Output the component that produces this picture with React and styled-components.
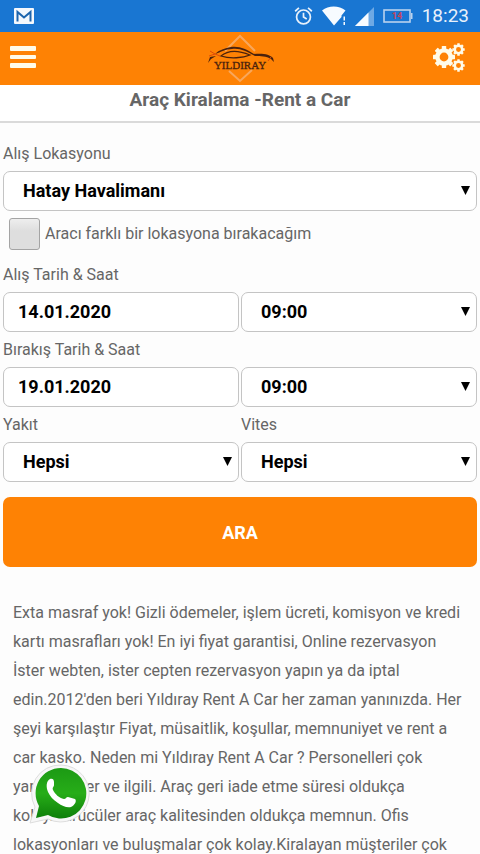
import { useState } from 'react';
import styled, { createGlobalStyle } from 'styled-components';

const GlobalStyle = createGlobalStyle`
  html {
    scrollbar-width: none;
  }

  body {
    margin: 0;
    background-color: #fdfdfd;
    color: #666;
    font-family: Roboto, 'Liberation Sans', sans-serif;
    font-size: 16px;
  }

  * {
    box-sizing: border-box;
  }
`;

const StatusBar = styled.div`
  height: 32px;
  padding: 0 11px 0 14px;
  display: flex;
  align-items: center;
  justify-content: space-between;
  background-color: #1976d2;
  color: #e8f1fb;

  svg {
    display: block;
  }
`;

const StatusIcons = styled.div`
  display: flex;
  align-items: center;
  gap: 9px;
`;

const Clock = styled.span`
  font-size: 19px;
  line-height: 32px;
`;

const Header = styled.header`
  height: 53px;
  padding: 0 10px;
  display: grid;
  grid-template-columns: 1fr auto 1fr;
  align-items: center;
  background-color: #fe8204;
`;

const IconButton = styled.button`
  border: none;
  background: none;
  padding: 0;
  color: #fffbe9;
  cursor: pointer;
  justify-self: ${props => props.$side};

  svg {
    display: block;
  }
`;

const LogoLink = styled.a`
  display: block;
  height: 53px;
`;

const PageTitle = styled.h1`
  margin: 0;
  height: 38px;
  padding-top: 3px;
  border-bottom: 2px solid #dadada;
  background-color: #fff;
  font-size: 19px;
  line-height: 24px;
  text-align: center;
`;

const SearchForm = styled.form`
  padding: 13px 3px 0;
`;

const FieldRow = styled.div`
  display: grid;
  grid-template-columns: ${props => (props.$single ? '1fr' : '1fr 1fr')};
  column-gap: 2px;
`;

const Field = styled.div`
  display: flex;
  flex-direction: column;
  justify-content: flex-end;
`;

const Label = styled.label`
  height: 35px;
  line-height: 35px;
`;

const TextInput = styled.input`
  width: 100%;
  height: 40px;
  padding: 0 14px 2px;
  border: 1px solid #c4c4c4;
  border-radius: 7px;
  background-color: #fff;
  color: #000;
  font: bold 18px Roboto, 'Liberation Sans', sans-serif;
`;

const SelectBox = styled.div`
  position: relative;

  svg {
    position: absolute;
    top: 15px;
    right: 7px;
    pointer-events: none;
  }
`;

const Select = styled(TextInput).attrs({ as: 'select' })`
  display: block;
  padding: 0 24px 2px 19px;
  appearance: none;
`;

const CheckRow = styled.div`
  padding: 7px 6px;
  display: flex;
  align-items: flex-start;
  gap: 5px;
`;

const CheckBox = styled.input`
  width: 31px;
  height: 32px;
  margin: 0;
  appearance: none;
  border: 1px solid #a4a4a4;
  border-radius: 3px;
  background: linear-gradient(#eee, #dedede 40%);

  &:checked {
    background: #fe8204;
  }
`;

const CheckLabel = styled.label`
  line-height: 31px;
`;

const SearchButton = styled.button`
  width: 100%;
  height: 70px;
  margin-top: 15px;
  border: none;
  border-radius: 7px;
  background-color: #fe8204;
  color: #fff;
  font: bold 18px Roboto, 'Liberation Sans', sans-serif;
  cursor: pointer;
`;

const Description = styled.p`
  margin: 0;
  padding: 31px 13px;
  line-height: 29px;
`;

const WhatsAppLink = styled.a`
  position: fixed;
  left: 29px;
  bottom: 30px;

  svg {
    display: block;
  }
`;

const times = ['09:00', '10:00', '11:00', '12:00'];

function GmailIcon() {
  return (
    <svg width="20" height="16" viewBox="0 0 20 16">
      <rect width="20" height="16" rx="1" fill="#f4f8fd" />
      <path
        d="M3.500 13.500V4l6.500 5.500L16.500 4v9.500"
        fill="none"
        stroke="#1c64ad"
        strokeWidth="2"
      />
    </svg>
  );
}

function AlarmIcon() {
  return (
    <svg
      width="19"
      height="20"
      viewBox="0 0 20 20"
      fill="none"
      stroke="#e8f1fb"
      strokeWidth="1.8"
    >
      <circle cx="10" cy="11" r="7.3" />
      <path d="M10 6.500V11l3.400 2.200M1.200 5l4-3.500M18.800 5l-4-3.500" />
    </svg>
  );
}

function WifiIcon() {
  return (
    <svg width="24" height="20" viewBox="0 0 24 20" fill="#f7fbff">
      <path d="M0 4.500C6.500-.9 17-.9 23.500 4.500L19.500 9.500V11L12 19.500z" />
      <path d="M21.500 10.500H23v4h-1.500zM21.500 16H23v3h-1.500z" />
    </svg>
  );
}

function SignalIcon() {
  return (
    <svg width="19" height="19" viewBox="0 0 19 19">
      <path d="M19 0v19H0z" fill="#6ea9e4" />
      <path d="M13.500 5.500V19H0z" fill="#f7fbff" />
    </svg>
  );
}

function BatteryIcon() {
  return (
    <svg width="30" height="14" viewBox="0 0 30 14">
      <rect
        x="1"
        y="1"
        width="26"
        height="12"
        fill="none"
        stroke="#b9d2ee"
        strokeWidth="1.600"
      />
      <path d="M28 4h1.500v6H28z" fill="#b9d2ee" />
      <text
        x="14"
        y="10"
        textAnchor="middle"
        fontSize="9"
        fontWeight="bold"
        fill="#c8455c"
      >
        14
      </text>
    </svg>
  );
}

function MenuIcon() {
  return (
    <svg width="26" height="25" viewBox="0 0 26 25" fill="currentColor">
      <rect x="0" y="0" width="26" height="5" rx="1" />
      <rect x="0" y="9" width="26" height="4" rx="1" />
      <rect x="0" y="17" width="26" height="5" rx="1" />
    </svg>
  );
}

function Gear({ x, y, r, teeth }) {
  const angles = Array.from({ length: teeth }, (_, i) => (i * 360) / teeth);
  return (
    <g transform={`translate(${x} ${y})`}>
      <circle
        r={r * 0.6}
        fill="none"
        stroke="currentColor"
        strokeWidth={r * 0.4}
      />
      {angles.map(angle => (
        <rect
          key={angle}
          x={-r * 0.2}
          y={-r}
          width={r * 0.4}
          height={r * 0.34}
          rx={r * 0.05}
          fill="currentColor"
          transform={`rotate(${angle})`}
        />
      ))}
    </g>
  );
}

function GearsIcon() {
  return (
    <svg width="37" height="31" viewBox="0 0 37 31">
      <Gear x={11} y={14} r={11} teeth={8} />
      <Gear x={25.500} y={6.500} r={6.200} teeth={8} />
      <Gear x={25.500} y={22.500} r={6.200} teeth={8} />
    </svg>
  );
}

function Logo() {
  return (
    <svg width="70" height="53" viewBox="0 0 70 53">
      <path
        d="M20 19L35 4l15 15M24 39l11 10 12-11"
        fill="none"
        stroke="#f8a75c"
        strokeWidth="2"
      />
      <path
        d="M10 22c4-4 10-6 16-7 9-1 15 2 23 7 8-1 16 0 19 4l1 4-3-3c-5-3-10-3-16-3-9-5-15-8-23-7-6 0-11 3-17 5z"
        fill="#4a220d"
      />
      <path
        d="M16 24c7-6 17-6 29-1-7 3-20 4-29 1z"
        fill="#fe8204"
        stroke="#4a220d"
        strokeWidth="1.300"
      />
      <path d="M3 31l2-6 6-1-5 3z" fill="#4a220d" />
      <path
        d="M5 19l5 3-6 2M66 25l-3 4M10 22l5 2"
        fill="none"
        stroke="#dd4b0b"
      />
      <text
        x="35"
        y="37"
        textAnchor="middle"
        fontFamily="Liberation Serif, serif"
        fontSize="11"
        fill="#4a220d"
        stroke="#4a220d"
        strokeWidth="0.300"
      >
        YILDIRAY
      </text>
    </svg>
  );
}

function WhatsAppIcon() {
  return (
    <svg width="62" height="60" viewBox="0 0 62 60">
      <defs>
        <linearGradient id="bubble" x1="0" y1="0" x2="0" y2="1">
          <stop offset="0" stopColor="#1c9a14" />
          <stop offset="0.500" stopColor="#27ad18" />
          <stop offset="1" stopColor="#0d7f09" />
        </linearGradient>
      </defs>
      <path
        d="M32 1a28.500 28.500 0 1 1-13 54L1 59l5-16A28.500 28.500 0 0 1 32 1z"
        fill="#f7f7f7"
        stroke="#ddd"
      />
      <path
        d="M32 4a25.300 25.300 0 1 1-13 47L7 54l3-12A25.300 25.300 0 0 1 32 4z"
        fill="url(#bubble)"
      />
      <path
        d="M21 15c2-1 4 0 4 3v3c0 2-2 2-1 5 2 4 6 8 11 9 2 0 2-2 4-2l7 2c2 2 0 6-4 8-4 1-9-1-13-4-5-3-8-7-10-11-2-5-2-11 2-13z"
        fill="#fff"
      />
    </svg>
  );
}

function SelectField({ id, label, options }) {
  return (
    <Field>
      {label ? <Label htmlFor={id}>{label}</Label> : null}
      <SelectBox>
        <Select id={id} aria-label={label ? undefined : 'Saat'}>
          {options.map(option => (
            <option key={option}>{option}</option>
          ))}
        </Select>
        <svg width="9" height="9" viewBox="0 0 9 9">
          <path d="M0 0h9L4.500 9z" fill="#000" />
        </svg>
      </SelectBox>
    </Field>
  );
}

function DateField({ id, label, value }) {
  return (
    <Field>
      <Label htmlFor={id}>{label}</Label>
      <TextInput id={id} type="text" defaultValue={value} />
    </Field>
  );
}

function App() {
  const [otherLocation, setOtherLocation] = useState(false);

  return (
    <>
      <GlobalStyle />
      <StatusBar>
        <GmailIcon />
        <StatusIcons>
          <AlarmIcon />
          <WifiIcon />
          <SignalIcon />
          <BatteryIcon />
          <Clock>18:23</Clock>
        </StatusIcons>
      </StatusBar>
      <Header>
        <IconButton type="button" $side="start" aria-label="Menü">
          <MenuIcon />
        </IconButton>
        <LogoLink href="#" aria-label="Yıldıray">
          <Logo />
        </LogoLink>
        <IconButton type="button" $side="end" aria-label="Ayarlar">
          <GearsIcon />
        </IconButton>
      </Header>
      <main>
        <PageTitle>Araç Kiralama -Rent a Car</PageTitle>
        <SearchForm onSubmit={e => e.preventDefault()}>
          <FieldRow $single>
            <SelectField
              id="location"
              label="Alış Lokasyonu"
              options={['Hatay Havalimanı']}
            />
          </FieldRow>
          <CheckRow>
            <CheckBox
              id="otherLocation"
              type="checkbox"
              checked={otherLocation}
              onChange={e => setOtherLocation(e.target.checked)}
            />
            <CheckLabel htmlFor="otherLocation">
              Aracı farklı bir lokasyona bırakacağım
            </CheckLabel>
          </CheckRow>
          <FieldRow>
            <DateField
              id="pickup"
              label="Alış Tarih & Saat"
              value="14.01.2020"
            />
            <SelectField id="pickupTime" options={times} />
          </FieldRow>
          <FieldRow>
            <DateField
              id="dropoff"
              label="Bırakış Tarih & Saat"
              value="19.01.2020"
            />
            <SelectField id="dropoffTime" options={times} />
          </FieldRow>
          <FieldRow>
            <SelectField
              id="fuel"
              label="Yakıt"
              options={['Hepsi', 'Benzin', 'Dizel']}
            />
            <SelectField
              id="gear"
              label="Vites"
              options={['Hepsi', 'Manuel', 'Otomatik']}
            />
          </FieldRow>
          <SearchButton type="submit">ARA</SearchButton>
        </SearchForm>
        <Description>
          Exta masraf yok! Gizli ödemeler, işlem ücreti, komisyon ve kredi kartı
          masrafları yok! En iyi fiyat garantisi, Online rezervasyon İster
          webten, ister cepten rezervasyon yapın ya da iptal edin.2012'den beri
          Yıldıray Rent A Car her zaman yanınızda. Her şeyi karşılaştır Fiyat,
          müsaitlik, koşullar, memnuniyet ve rent a car kasko. Neden mi Yıldıray
          Rent A Car ? Personelleri çok yardımsever ve ilgili. Araç geri iade
          etme süresi oldukça kolay.Sürücüler araç kalitesinden oldukça memnun.
          Ofis lokasyonları ve buluşmalar çok kolay.Kiralayan müşteriler çok
        </Description>
      </main>
      <WhatsAppLink href="#" aria-label="WhatsApp">
        <WhatsAppIcon />
      </WhatsAppLink>
    </>
  );
}

export default App;
